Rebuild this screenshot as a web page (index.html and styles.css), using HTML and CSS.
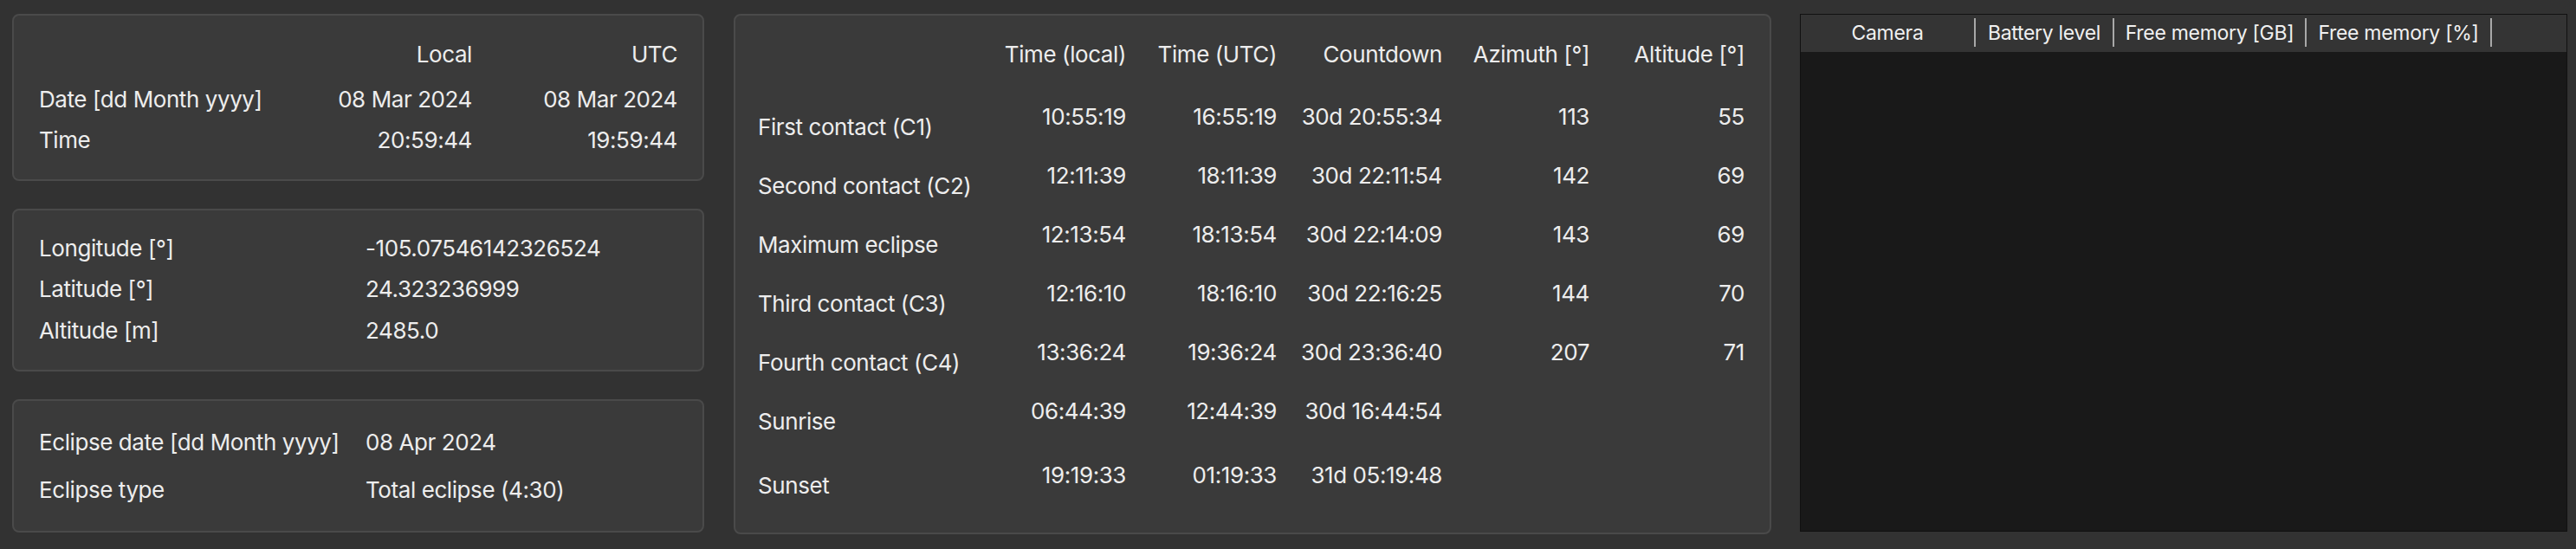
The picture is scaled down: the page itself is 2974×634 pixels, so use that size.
FILE: index.html
```html
<!DOCTYPE html>
<html lang="en">
<head>
<meta charset="utf-8">
<title>Eclipse</title>
<link rel="stylesheet" href="styles.css">
</head>
<body>
<div class="app">
  <div class="col-left">
    <section class="box box-time">
      <div></div><div class="r">Local</div><div class="r">UTC</div>
      <div>Date [dd Month yyyy]</div><div class="r">08 Mar 2024</div><div class="r">08 Mar 2024</div>
      <div>Time</div><div class="r">20:59:44</div><div class="r">19:59:44</div>
    </section>
    <section class="box box-loc">
      <div>Longitude [°]</div><div>-105.07546142326524</div>
      <div>Latitude [°]</div><div>24.323236999</div>
      <div>Altitude [m]</div><div>2485.0</div>
    </section>
    <section class="box box-eclipse">
      <div>Eclipse date [dd Month yyyy]</div><div>08 Apr 2024</div>
      <div>Eclipse type</div><div>Total eclipse (4:30)</div>
    </section>
  </div>

  <section class="box box-contacts">
    <div class="h"></div>
    <div class="h r">Time (local)</div>
    <div class="h r">Time (UTC)</div>
    <div class="h r">Countdown</div>
    <div class="h r">Azimuth [°]</div>
    <div class="h r">Altitude [°]</div>

    <div class="lbl">First contact (C1)</div>
    <div class="v">10:55:19</div><div class="v">16:55:19</div><div class="v">30d 20:55:34</div><div class="v">113</div><div class="v">55</div>

    <div class="lbl">Second contact (C2)</div>
    <div class="v">12:11:39</div><div class="v">18:11:39</div><div class="v">30d 22:11:54</div><div class="v">142</div><div class="v">69</div>

    <div class="lbl">Maximum eclipse</div>
    <div class="v">12:13:54</div><div class="v">18:13:54</div><div class="v">30d 22:14:09</div><div class="v">143</div><div class="v">69</div>

    <div class="lbl">Third contact (C3)</div>
    <div class="v">12:16:10</div><div class="v">18:16:10</div><div class="v">30d 22:16:25</div><div class="v">144</div><div class="v">70</div>

    <div class="lbl">Fourth contact (C4)</div>
    <div class="v">13:36:24</div><div class="v">19:36:24</div><div class="v">30d 23:36:40</div><div class="v">207</div><div class="v">71</div>

    <div class="lbl">Sunrise</div>
    <div class="v">06:44:39</div><div class="v">12:44:39</div><div class="v">30d 16:44:54</div><div class="v"></div><div class="v"></div>

    <div class="lbl">Sunset</div>
    <div class="v">19:19:33</div><div class="v">01:19:33</div><div class="v">31d 05:19:48</div><div class="v"></div><div class="v"></div>
  </section>

  <section class="cams">
    <div class="cams-head">
      <div class="th th-cam">Camera</div>
      <div class="th th-bat">Battery level</div>
      <div class="th th-gb">Free memory [GB]</div>
      <div class="th th-pct">Free memory [%]</div>
    </div>
    <div class="cams-body"></div>
  </section>
</div>
</body>
</html>
```

FILE: styles.css
```css
* { box-sizing: border-box; }

html, body {
  margin: 0;
  background: #323232;
}

body {
  font-family: Inter, "Liberation Sans", sans-serif;
  font-size: 26px;
  letter-spacing: -0.42px;
  color: #ededed;
}

.app {
  display: flex;
  align-items: flex-start;
  padding: 16px 10px 0 14px;
}

.col-left {
  width: 799px;
  display: flex;
  flex-direction: column;
  gap: 32px;
}

.box {
  background: #3a3a3a;
  border: 2px solid #4a4a4a;
  border-radius: 8px;
  display: grid;
  align-items: center;
  white-space: nowrap;
}

.r { text-align: right; }

.box-time {
  grid-template-columns: 300px 200px 237px;
  grid-template-rows: 45px 58px 36px;
  padding: 22px 29px 28px;
}

.box-loc {
  grid-template-columns: 377px 1fr;
  grid-template-rows: 48px 47px 48px;
  padding: 19px 29px 22px;
}

.box-eclipse {
  grid-template-columns: 377px 1fr;
  grid-template-rows: 55px 55px;
  padding: 20px 29px;
}

.box-contacts {
  margin-left: 34px;
  width: 1198px;
  grid-template-columns: 255px 170px 174px 191px 170px 179px;
  grid-template-rows: 80px repeat(6, 68px) 80px;
  padding: 14px 29px 15px 26px;
}

.box-contacts .h {
  align-self: start;
  line-height: 62px;
}

.box-contacts .v {
  text-align: right;
  padding-bottom: 24px;
}

.cams {
  margin-left: 33px;
  width: 886px;
  height: 598px;
  border: 1px solid #111111;
  background: #191919;
  display: flex;
  flex-direction: column;
}

.cams-head {
  display: flex;
  background: #343434;
  padding: 4px 0 6px;
}

.th {
  height: 33px;
  border-right: 2px solid #a8a8a8;
  display: flex;
  align-items: center;
  justify-content: center;
  font-size: 23px;
  letter-spacing: -0.3px;
  color: #f0f0f0;
  white-space: nowrap;
}

.th-cam { width: 202px; }
.th-bat { width: 160px; }
.th-gb { width: 222px; }
.th-pct { width: 214px; }

.cams-body {
  flex: 1;
}
```
